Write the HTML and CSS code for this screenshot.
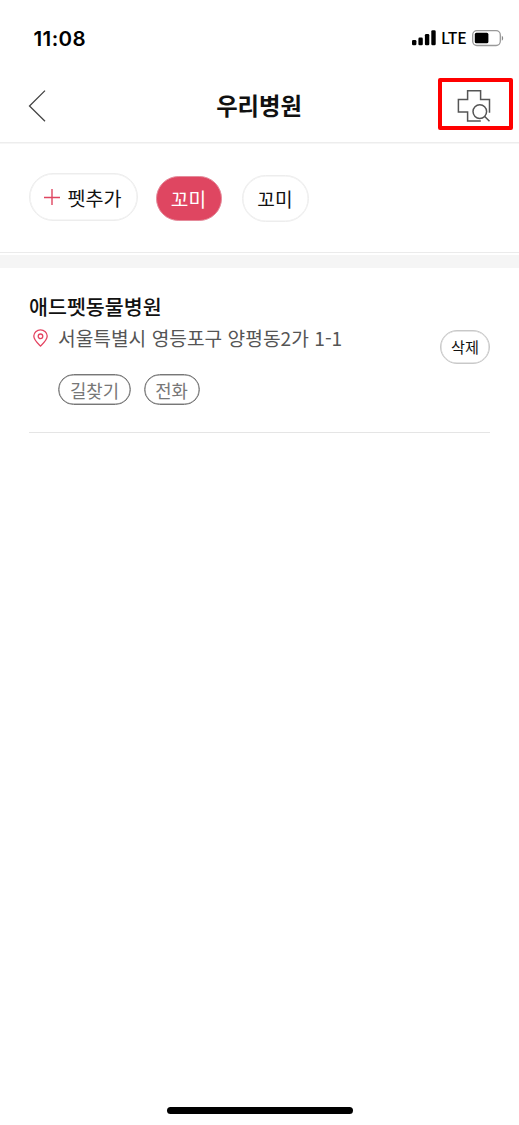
FILE: index.html
```html
<!DOCTYPE html>
<html lang="ko">
<head>
<meta charset="utf-8">
<title>우리병원</title>
<link rel="stylesheet" href="styles.css">
</head>
<body>
<div class="screen">
  <div class="status">
    <span class="time">11:08</span>
    <svg class="signal" width="24" height="16" viewBox="0 0 24 16"><rect x="0" y="10" width="4.4" height="5.3" rx="1.3"/><rect x="6.4" y="7.6" width="4.4" height="7.7" rx="1.3"/><rect x="12.9" y="4" width="4.4" height="11.3" rx="1.3"/><rect x="19.3" y="0.2" width="4.4" height="15.1" rx="1.3"/></svg>
    <span class="network">LTE</span>
    <svg class="battery" width="32" height="17" viewBox="0 0 32 17"><rect x="0.7" y="0.7" width="27.6" height="14.8" rx="4.2" fill="none" stroke="#999" stroke-width="1.3"/><rect x="2.8" y="2.8" width="13.6" height="10.5" rx="1.6"/><path d="M29.8 5.7c1.8.8 1.8 4.2 0 5z" fill="#888"/></svg>
  </div>
  <header class="header">
    <button class="back" aria-label="뒤로"><svg width="18" height="32" viewBox="0 0 18 32" fill="none" stroke="#444" stroke-width="1.3"><path d="M17 .6 1.5 16 17 31.2"/></svg></button>
    <h1 class="title">우리병원</h1>
    <button class="search" aria-label="병원 검색"><svg width="34" height="34" viewBox="0 0 34 34" fill="none" stroke="#555" stroke-width="1.5"><path d="M23.8 32.1H10.6V23H1.4V10.4h9.2V1.7h13v8.7h8.9v13.3"/><circle cx="22.8" cy="22.6" r="6.8"/><path d="m27.5 27.3 5 5"/></svg></button>
  </header>
  <nav class="pets">
    <button class="pet add"><svg width="16" height="16" viewBox="0 0 16 16" stroke="#df4661" stroke-width="1.4"><path d="M0 8.5h16M8 0v16"/></svg>펫추가</button>
    <button class="pet selected">꼬미</button>
    <button class="pet plain">꼬미</button>
  </nav>
  <div class="divider"></div>
  <main class="list">
    <article class="hospital">
      <div class="info">
        <h2 class="name">애드펫동물병원</h2>
        <p class="address"><svg width="15" height="18" viewBox="0 0 15 18" fill="none" stroke="#e44562" stroke-width="1.3"><path d="M7.5 17C5.9 15.4.8 11.4.8 7.1a6.7 6.2 0 0 1 13.4 0c0 4.3-5.1 8.3-6.7 9.9z"/><circle cx="7.5" cy="7.3" r="2.3"/></svg><span>서울특별시 영등포구 양평동2가 1-1</span></p>
        <div class="actions">
          <button class="action">길찾기</button>
          <button class="action">전화</button>
        </div>
      </div>
      <button class="remove">삭제</button>
    </article>
  </main>
  <div class="home"></div>
</div>
</body>
</html>
```
FILE: styles.css
```css
* { box-sizing: border-box; }
body { margin: 0; background: #fff; color: #111; font-family: "Noto Sans CJK KR", sans-serif; }
h1, h2, p { margin: 0; }
button { margin: 0; padding: 0; border: 0; background: none; font: inherit; color: inherit; display: flex; align-items: center; justify-content: center; white-space: nowrap; }
svg { display: block; flex: none; }
.screen { width: 519px; height: 1125px; display: flex; flex-direction: column; }
.status { height: 78px; padding: 0 15px 2px 33.5px; display: flex; flex: none; align-items: center; color: #000; }
.time { flex: 1; padding-top: 1px; font: 600 20.5px/24px Inter, sans-serif; letter-spacing: .4px; }
.signal { margin-right: 5px; }
.network { width: 31px; font: 500 15.8px/20px "Noto Sans CJK KR", sans-serif; }
.header { height: 65px; padding-right: 6px; padding-left: 28px; border-bottom: 1px solid #ededed; box-shadow: 0 1px 0 #f6f6f6; display: grid; grid-template-columns: 75px 1fr 75px; align-items: start; }
.back { height: 55px; justify-content: flex-start; }
.title { height: 55px; margin-right: 23px; text-align: center; font-size: 23.3px; line-height: 55px; font-weight: 700; }
.search { width: 75px; height: 52px; border: 4px solid #f00; border-radius: 2px; padding-top: 3px; padding-right: 4px; }
.pets { height: 110px; padding: 30px 29px 0; border-bottom: 1px solid #ebebeb; display: flex; align-items: flex-start; flex: none; }
.pet { border: 1px solid #ededed; box-shadow: inset 0 0 0 .5px #ededed; border-radius: 24px; font-size: 19.2px; height: 47px; }
.add { width: 109px; height: 48px; padding-right: 1px; gap: 7px; font-size: 19.6px; }
.selected { width: 66px; height: 45px; margin: 3px 0 0 18px; padding-right: 1px; border-color: #e58b9b; box-shadow: none; background: #df4661; color: #fff; }
.plain { width: 67px; margin: 2px 0 0 20px; padding-right: 1px; }
.divider { height: 13px; margin-top: 2px; background: #f5f5f5; flex: none; }
.list { flex: 1; padding: 22px 29px 0; }
.hospital { height: 143px; border-bottom: 1px solid #e5e5e5; display: flex; justify-content: space-between; align-items: flex-start; }
.name { font-size: 20.6px; line-height: 32px; font-weight: 500; }
.address { display: flex; align-items: center; gap: 10px; padding-left: 4px; font-size: 19.2px; line-height: 32px; color: #555; white-space: nowrap; }
.actions { display: flex; gap: 13px; padding: 20px 0 0 29px; }
.action { width: 73px; height: 31px; border: 1px solid #777; box-shadow: inset 0 0 0 .5px #888; border-radius: 16px; font-size: 17.8px; line-height: 26px; color: #777; }
.action + .action { width: 56px; padding-right: 1px; }
.remove { width: 50px; height: 34px; margin-top: 40px; padding-bottom: 2px; border: 1px solid #c8c8c8; box-shadow: inset 0 0 0 .5px #ccc; border-radius: 18px; font-size: 15.2px; }
.home { width: 186px; height: 7px; margin: 0 0 11px 167px; border-radius: 4px; background: #000; flex: none; }
```
